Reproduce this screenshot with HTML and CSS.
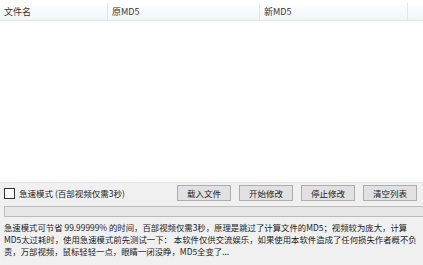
FILE: index.html
```html
<!DOCTYPE html>
<html>
  <head>
    <meta charset="UTF-8">
    <title>MD5修改</title>
    <link rel="stylesheet" href="styles.css">
  </head>
  <body>
    <div class="window">
      <div class="list">
        <div class="list-header">
          <div class="col col-name">文件名</div>
          <div class="col col-old">原MD5</div>
          <div class="col col-new">新MD5</div>
          <div class="col col-rest"></div>
        </div>
      </div>
      <div class="toolbar">
        <label class="fast-mode">
          <span class="checkbox"></span>
          急速模式 (百部视频仅需3秒)
        </label>
        <div class="buttons">
          <button class="btn">载入文件</button>
          <button class="btn">开始修改</button>
          <button class="btn">停止修改</button>
          <button class="btn">清空列表</button>
        </div>
      </div>
      <div class="progress"></div>
      <p class="notice">急速模式可节省 99.99999% 的时间，百部视频仅需3秒，原理是跳过了计算文件的MD5；视频较为庞大，计算MD5太过耗时，使用急速模式前先测试一下： 本软件仅供交流娱乐，如果使用本软件造成了任何损失作者概不负责，万部视频，鼠标轻轻一点，眼睛一闭没睁，MD5全变了...</p>
    </div>
  </body>
</html>
```

FILE: styles.css
```css
body {
  margin: 0;
  background-color: #f0f0f0;
  font-family: "Noto Sans CJK SC", "Noto Sans", sans-serif;
  color: #222;
}
.window {
  width: 423px;
  height: 265px;
  overflow: hidden;
}
.list {
  height: 183px;
  background-color: white;
  border-bottom: 1px solid #e3e3e3;
  padding-top: 3px;
  box-sizing: border-box;
}
.list-header {
  display: flex;
  height: 17px;
  background: linear-gradient(#ffffff, #f3f4f6);
  border-bottom: 1px solid #e5e5e5;
}
.col {
  font-size: 9px;
  line-height: 17px;
  padding-left: 4px;
  border-right: 1px solid #e5e5e5;
  color: #333;
  box-sizing: border-box;
}
.col-name {
  width: 108px;
}
.col-old {
  width: 152px;
}
.col-new {
  width: 148px;
}
.col-rest {
  flex: 1;
  border-right: none;
}
.toolbar {
  display: flex;
  align-items: center;
  justify-content: space-between;
  height: 18px;
  margin-top: 1px;
  padding: 0 6px 0 4px;
}
.fast-mode {
  display: flex;
  align-items: center;
  gap: 4px;
  font-size: 8.5px;
  color: #222;
}
.checkbox {
  width: 9px;
  height: 9px;
  border: 1px solid #333;
  background-color: white;
}
.buttons {
  display: flex;
  gap: 8px;
}
.btn {
  width: 54px;
  height: 16px;
  padding: 0;
  font-family: inherit;
  font-size: 8.5px;
  color: #222;
  background-color: #e1e1e1;
  border: 1px solid #adadad;
}
.progress {
  height: 9px;
  margin: 4px 0 0 4px;
  background-color: #e6e6e6;
  border: 1px solid #bcbcbc;
  border-right: none;
}
.notice {
  margin: 4px 0 0 4px;
  font-size: 8.4px;
  line-height: 12px;
  color: #222;
}
```
